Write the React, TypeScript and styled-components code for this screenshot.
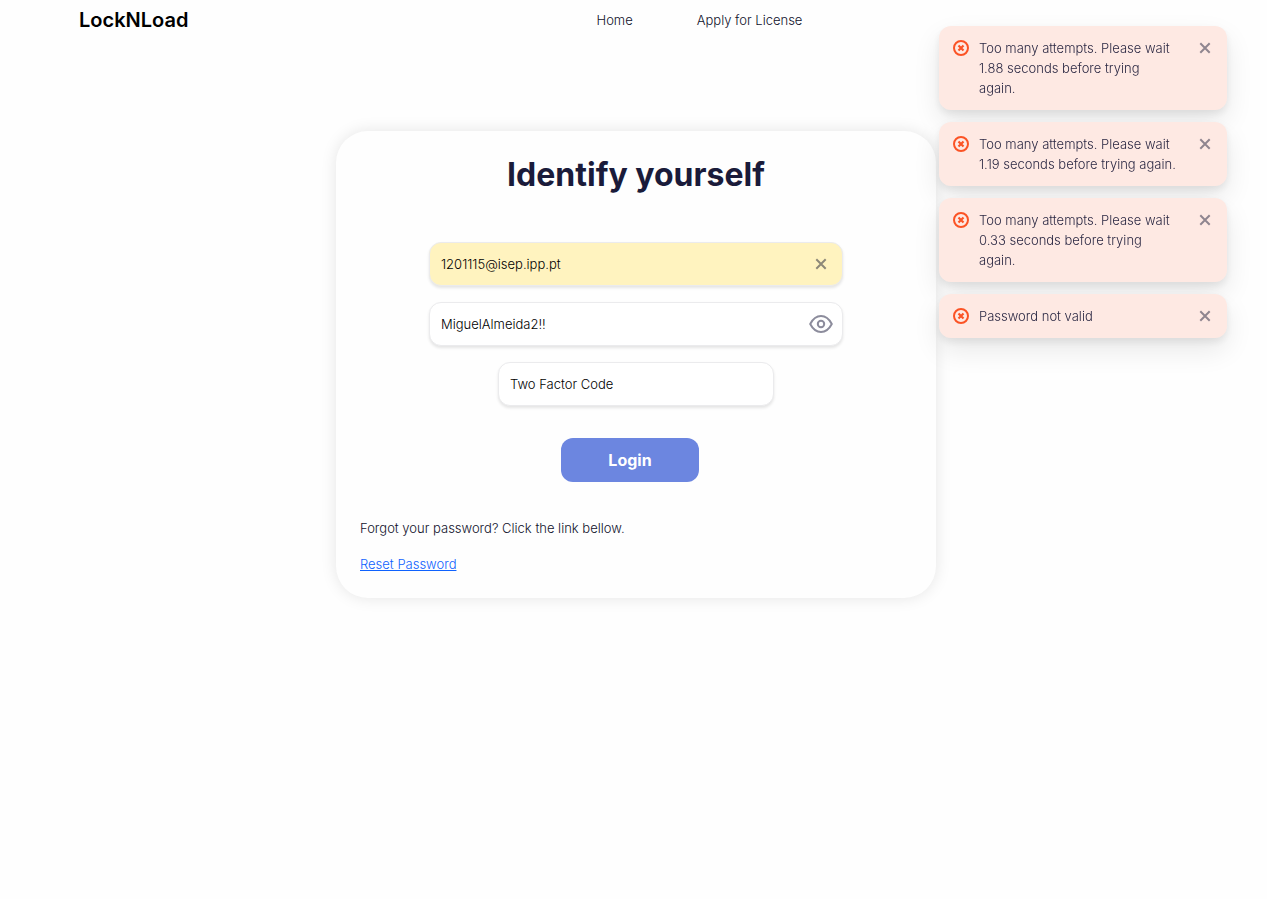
import React, { useState } from 'react';
import styled, { createGlobalStyle } from 'styled-components';

const GlobalStyle = createGlobalStyle`
  *, *::before, *::after { box-sizing: border-box; }
  body {
    margin: 0;
    background: #fefefe;
    color: #10112b;
    font-family: Inter, "Liberation Sans", sans-serif;
    font-size: 13px;
    font-weight: 300;
    line-height: 20px;
  }
  input, button { font: inherit; }
`;

const Header = styled.header`
  display: grid;
  grid-template-columns: 7fr 8fr;
  align-items: center;
  min-height: 40px;
  padding: 0 79px;
`;

const Logo = styled.a`
  color: #000;
  font-size: 20px;
  font-weight: 600;
  text-decoration: none;
`;

const Nav = styled.nav`
  display: flex;
  gap: 64px;
`;

const NavLink = styled.a`
  color: #10112b;
  text-decoration: none;
`;

const Main = styled.main`
  display: flex;
  justify-content: center;
  padding: 91px 0 40px 5px;
`;

const Card = styled.form`
  display: flex;
  flex-direction: column;
  width: 100%;
  max-width: 600px;
  padding: 24px;
  border-radius: 32px;
  background: #fefefe;
  box-shadow: 0 0 16px rgba(0, 0, 0, 0.1);
`;

const Title = styled.h1`
  margin: 0 0 47px;
  color: #1a1b3a;
  font-size: 32px;
  font-weight: 700;
  line-height: 40px;
  text-align: center;
`;

const Fields = styled.div`
  display: flex;
  flex-direction: column;
  align-items: center;
  gap: 16px;
`;

const Field = styled.div<{ $width: string; $filled?: boolean }>`
  display: flex;
  align-items: center;
  width: ${(p) => p.$width};
  height: 44px;
  padding: 0 9px 0 11px;
  border: 1px solid #ebebed;
  border-radius: 12px;
  background: ${(p) => (p.$filled ? '#fff3bf' : '#fff')};
  box-shadow: 0 2px 3px rgba(0, 0, 0, 0.1);
`;

const TextInput = styled.input`
  flex: 1;
  min-width: 0;
  padding: 0;
  border: 0;
  outline: 0;
  background: transparent;
  color: #000;
  &::placeholder { color: #000; opacity: 1; }
`;

const IconButton = styled.button`
  display: grid;
  place-items: center;
  flex: none;
  width: 24px;
  height: 24px;
  padding: 0;
  border: 0;
  background: transparent;
  color: #8c8c9c;
  cursor: pointer;
`;

const ClearButton = styled(IconButton)`
  color: #8d8878;
`;

const LoginButton = styled.button`
  align-self: center;
  width: 25%;
  height: 44px;
  margin: 32px 12px 36px 0;
  padding: 0;
  border: 0;
  border-radius: 12px;
  background: #6c86e0;
  color: #fff;
  font-size: 16px;
  font-weight: 700;
  cursor: pointer;
`;

const Hint = styled.p`
  margin: 0 0 16px;
`;

const ResetLink = styled.a`
  align-self: flex-start;
  color: #0f62fe;
  text-decoration: underline;
`;

const ToastList = styled.ul`
  position: fixed;
  top: 26px;
  right: 40px;
  display: flex;
  flex-direction: column;
  gap: 12px;
  width: 288px;
  margin: 0;
  padding: 0;
  list-style: none;
`;

const Toast = styled.li`
  display: flex;
  align-items: flex-start;
  padding: 12px 10px 12px 14px;
  border-radius: 12px;
  background: #fee9e3;
  box-shadow: 0 12px 28px rgba(0, 0, 0, 0.09), 0 4px 8px rgba(0, 0, 0, 0.08);
`;

const ToastText = styled.p`
  flex: 1;
  margin: 0 0 0 10px;
  color: #2c2944;
  white-space: pre-line;
`;

const ToastIcon = styled.svg`
  flex: none;
  margin-top: 2px;
`;

const ToastClose = styled(IconButton)`
  height: 20px;
  color: #8f858f;
`;

const Cross = () => (
  <svg width="12" height="12" viewBox="0 0 12 12" fill="none" stroke="currentColor" strokeWidth="2" aria-hidden="true">
    <path d="M1.3 1.3 10.7 10.7M10.7 1.3 1.3 10.7" />
  </svg>
);

const Eye = () => (
  <svg width="24" height="24" viewBox="0 0 24 24" fill="none" stroke="currentColor" strokeWidth="2" strokeLinejoin="round" aria-hidden="true">
    <path d="M1.2 12C3.8 7 7.5 4 12 4s8.2 3 10.8 8C20.2 17 16.5 20 12 20S3.8 17 1.2 12Z" />
    <circle cx="12" cy="12" r="3.2" />
  </svg>
);

const ErrorIcon = () => (
  <ToastIcon width="16" height="16" viewBox="0 0 16 16" fill="none" stroke="#fb5325" strokeWidth="2" aria-hidden="true">
    <circle cx="8" cy="8" r="7" />
    <path d="M5.5 5.5 10.5 10.5M10.5 5.5 5.5 10.5" strokeWidth="2.2" />
  </ToastIcon>
);

const initialToasts = [
  'Too many attempts. Please wait\n1.88 seconds before trying\nagain.',
  'Too many attempts. Please wait\n1.19 seconds before trying again.',
  'Too many attempts. Please wait\n0.33 seconds before trying\nagain.',
  'Password not valid',
];

export default function App() {
  const [email, setEmail] = useState('1201115@isep.ipp.pt');
  const [password, setPassword] = useState('MiguelAlmeida2!!');
  const [visible, setVisible] = useState(true);
  const [toasts, setToasts] = useState(initialToasts);

  return (
    <>
      <GlobalStyle />
      <Header>
        <Logo href="#">LockNLoad</Logo>
        <Nav>
          <NavLink href="#home">Home</NavLink>
          <NavLink href="#license">Apply for License</NavLink>
        </Nav>
      </Header>
      <Main>
        <Card onSubmit={(e) => e.preventDefault()}>
          <Title>Identify yourself</Title>
          <Fields>
            <Field $width="75%" $filled>
              <TextInput aria-label="Email" value={email} onChange={(e) => setEmail(e.target.value)} />
              <ClearButton type="button" aria-label="Clear email" onClick={() => setEmail('')}>
                <Cross />
              </ClearButton>
            </Field>
            <Field $width="75%">
              <TextInput
                aria-label="Password"
                type={visible ? 'text' : 'password'}
                value={password}
                onChange={(e) => setPassword(e.target.value)}
              />
              <IconButton type="button" aria-label="Toggle password visibility" onClick={() => setVisible(!visible)}>
                <Eye />
              </IconButton>
            </Field>
            <Field $width="50%">
              <TextInput aria-label="Two Factor Code" placeholder="Two Factor Code" />
            </Field>
          </Fields>
          <LoginButton type="submit">Login</LoginButton>
          <Hint>Forgot your password? Click the link bellow.</Hint>
          <ResetLink href="#reset">Reset Password</ResetLink>
        </Card>
      </Main>
      <ToastList>
        {toasts.map((message) => (
          <Toast key={message} role="alert">
            <ErrorIcon />
            <ToastText>{message}</ToastText>
            <ToastClose
              type="button"
              aria-label="Dismiss"
              onClick={() => setToasts(toasts.filter((t) => t !== message))}
            >
              <Cross />
            </ToastClose>
          </Toast>
        ))}
      </ToastList>
    </>
  );
}
